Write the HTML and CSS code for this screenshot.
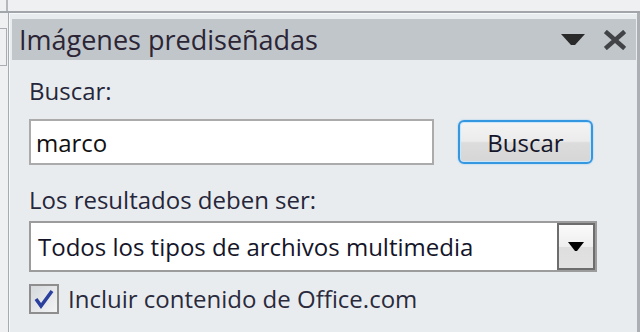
FILE: index.html
```html
<!DOCTYPE html>
<html lang="es">
<head>
    <meta charset="UTF-8">
    <meta name="viewport" content="width=device-width, initial-scale=1.0">
    <title>Imágenes prediseñadas</title>
    <link rel="stylesheet" href="styles.css">
</head>
<body>
    <div class="topbar">
        <span class="top-cell first"></span>
        <span class="top-cell"></span>
    </div>
    <div class="main">
        <div class="gutter">
            <div class="gutter-box"></div>
        </div>
        <div class="panel">
            <div class="panel-header">
                <span class="panel-title">Imágenes prediseñadas</span>
                <div class="panel-tools">
                    <svg class="tool-menu" width="24" height="12" viewBox="0 0 24 12">
                        <path d="M0 0 H24 L14 11 H10 Z" fill="#2a2a2a"/>
                    </svg>
                    <svg class="tool-close" width="22" height="20" viewBox="0 0 22 20">
                        <path d="M3 3 L19 17 M19 3 L3 17" stroke="#414346" stroke-width="4.5" stroke-linecap="square"/>
                    </svg>
                </div>
            </div>
            <div class="panel-body">
                <label class="field-label" for="search">Buscar:</label>
                <div class="search-row">
                    <input class="search-input" id="search" type="text" value="marco">
                    <button class="search-button" type="button">Buscar</button>
                </div>
                <label class="field-label results-label" for="kind">Los resultados deben ser:</label>
                <div class="select-box" id="kind">
                    <span class="select-text">Todos los tipos de archivos multimedia</span>
                    <span class="select-drop">
                        <svg width="16" height="10" viewBox="0 0 16 10">
                            <path d="M0 0 H16 L9 9 H7 Z" fill="#000"/>
                        </svg>
                    </span>
                </div>
                <div class="check-row">
                    <span class="check-box">
                        <svg width="24" height="24" viewBox="0 0 24 24">
                            <path d="M4 12 L9 19 L20 4" fill="none" stroke="#2b3f9e" stroke-width="3.5"/>
                        </svg>
                    </span>
                    <span class="check-label">Incluir contenido de Office.com</span>
                </div>
            </div>
        </div>
    </div>
</body>
</html>
```

FILE: styles.css
```css
body {
    margin: 0;
    background-color: #e9ecef;
    font-family: "Open Sans", "Noto Sans", Arial, sans-serif;
    color: #222230;
    width: 640px;
    height: 332px;
    overflow: hidden;
}
.topbar {
    height: 11px;
    background-color: #eef0f2;
    border-bottom: 2px solid #a2a6ab;
    display: flex;
}
.top-cell {
    width: 555px;
    border-left: 1px solid #b4b8bc;
}
.top-cell.first {
    width: 0;
    margin-left: 6px;
}
.main {
    display: flex;
    height: 319px;
}
.gutter {
    width: 8px;
    background-color: #eef0f2;
    padding-top: 15px;
}
.gutter-box {
    height: 36px;
    border-top: 1px solid #a9adb2;
    border-bottom: 1px solid #a9adb2;
    border-right: 1px solid #a9adb2;
    margin-right: 1px;
}
.panel {
    flex: 1;
    border-left: 1px solid #a7abb0;
    border-right: 3px solid #acb0b4;
    box-shadow: inset 1px 1px 0 #f7f8f9;
    padding: 6px 1px 0 3px;
}
.panel-header {
    height: 41px;
    background-color: #c1c6cb;
    display: flex;
    align-items: center;
    justify-content: space-between;
    padding: 0 10px 0 7px;
}
.panel-title {
    font-size: 27px;
    color: #2b2535;
}
.panel-tools {
    display: flex;
    align-items: center;
    gap: 19px;
}
.panel-body {
    padding: 0 0 0 17px;
}
.field-label {
    display: block;
    font-size: 24px;
    color: #26263a;
    margin-top: 16px;
    line-height: 30px;
}
.search-row {
    display: flex;
    align-items: center;
    gap: 24px;
    margin-top: 13px;
}
.search-input {
    width: 405px;
    height: 46px;
    box-sizing: border-box;
    border: 2px solid #ababab;
    background: #fff;
    font-family: inherit;
    font-size: 24px;
    padding: 0 5px;
    color: #111;
    outline: none;
}
.search-button {
    width: 135px;
    height: 44px;
    border: 2px solid #3597e0;
    border-radius: 6px;
    box-shadow: 0 0 2px #8fc7f0, inset 0 0 0 1px #c9e6fb;
    background: linear-gradient(#f4f4f4 0%, #ebebeb 48%, #dcdcdc 52%, #d6d6d6 100%);
    font-family: inherit;
    font-size: 24px;
    color: #15152a;
    padding: 0;
}
.results-label {
    margin-top: 20px;
}
.select-box {
    width: 568px;
    height: 51px;
    box-sizing: border-box;
    border: 2px solid #9c9c9c;
    background: #fff;
    display: flex;
    align-items: center;
    justify-content: space-between;
    margin-top: 6px;
}
.select-text {
    font-size: 24px;
    color: #15152a;
    padding-left: 7px;
}
.select-drop {
    width: 38px;
    height: 47px;
    box-sizing: border-box;
    border: 2px solid #6d6d6d;
    background: linear-gradient(#fbfbfb 0%, #eeeeee 50%, #dedede 51%, #e2e2e2 100%);
    display: flex;
    align-items: center;
    justify-content: center;
}
.check-row {
    display: flex;
    align-items: center;
    gap: 9px;
    margin-top: 10px;
}
.check-box {
    width: 30px;
    height: 30px;
    box-sizing: border-box;
    border: 2px solid #8e8e8e;
    background: linear-gradient(135deg, #d6d9dd, #f2f3f4);
    display: flex;
    align-items: center;
    justify-content: center;
}
.check-label {
    font-size: 24px;
    color: #2a2a3c;
}
```
